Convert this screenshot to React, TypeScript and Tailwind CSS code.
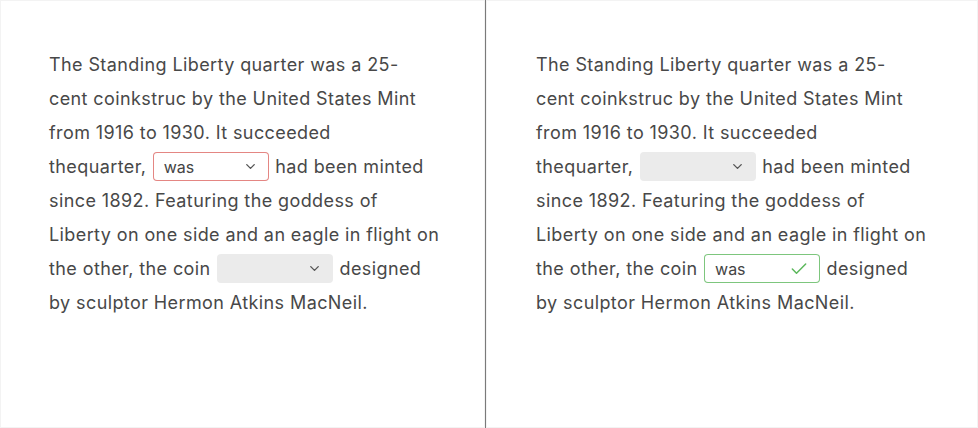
import { Check, ChevronDown } from 'lucide-react'

type Blank = 'wrong' | 'empty' | 'right'

function Select({ state }: { state: Blank }) {
  const box =
    state === 'wrong'
      ? 'border border-[#d9534f]/70 bg-white'
      : state === 'right'
        ? 'border border-[#5cb85c]/80 bg-white'
        : 'border border-transparent bg-[#ebebeb]'
  return (
    <span
      className={`inline-flex items-center justify-between align-middle w-[116px] h-[29px] rounded-[4px] pl-[10px] pr-[10px] mx-[1px] -mt-[3px] tracking-normal ${box}`}
    >
      <span className="text-[16px] text-[#444]">{state === 'empty' ? '' : 'was'}</span>
      {state === 'right' ? (
        <Check size={20} strokeWidth={1.8} className="text-[#5cb85c]" />
      ) : (
        <ChevronDown size={15} strokeWidth={2.2} className="text-[#555]" />
      )}
    </span>
  )
}

function Passage({ first, second }: { first: Blank; second: Blank }) {
  return (
    <div className="text-[18px] leading-[34px] tracking-[0.4px] text-[#484848] whitespace-nowrap">
      <div>The Standing Liberty quarter was a 25-</div>
      <div>cent coinkstruc by the United States Mint</div>
      <div>from 1916 to 1930. It succeeded</div>
      <div>
        thequarter, <Select state={first} /> had been minted
      </div>
      <div>since 1892. Featuring the goddess of</div>
      <div>Liberty on one side and an eagle in flight on</div>
      <div>
        the other, the coin <Select state={second} /> designed
      </div>
      <div>by sculptor Hermon Atkins MacNeil.</div>
    </div>
  )
}

export default function App() {
  return (
    <div
      className="w-[978px] h-[428px] bg-white flex"
      style={{ fontFamily: 'Inter, "Open Sans", sans-serif' }}
    >
      <div className="w-[485px] h-full border border-[#f3f3f3] pl-[48px] pt-[47px]">
        <Passage first="wrong" second="empty" />
      </div>
      <div className="w-[1px] h-full bg-[#7a7a7a]" />
      <div className="flex-1 h-full border border-[#f3f3f3] pl-[49px] pt-[47px]">
        <Passage first="empty" second="right" />
      </div>
    </div>
  )
}
